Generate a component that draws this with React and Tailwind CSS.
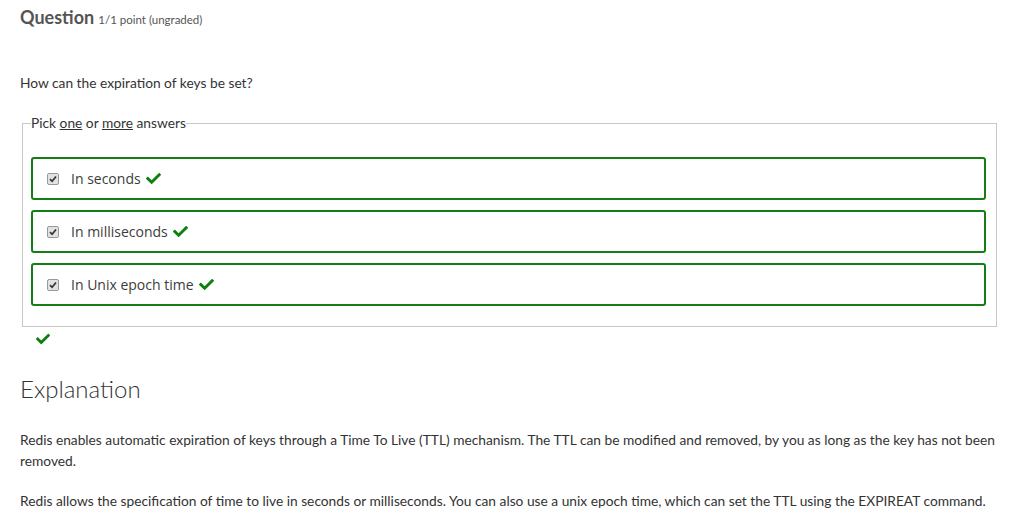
import React from "react";
import { FaCheck } from "react-icons/fa";

const answers = ["In seconds", "In milliseconds", "In Unix epoch time"];

const Option = ({ label }) => {
  return (
    <label className="flex items-center h-[43px] border-2 border-[#137e13] rounded-[3px] pl-[14px]">
      <span className="w-[12px] h-[12px] border border-[#999] rounded-[2px] bg-[#e2e2e2] flex items-center justify-center">
        <svg width="8" height="8" viewBox="0 0 8 8">
          <path d="M1 4.2 L3.1 6.3 L7 1.5" fill="none" stroke="#333" strokeWidth="1.7" />
        </svg>
      </span>
      <span className="ml-[12px] text-[14px] text-[#3c3c3c] font-['Open_Sans',sans-serif]">{label}</span>
      <FaCheck className="ml-[5px] text-[#0d7f0d] w-[15px] h-[15px]" />
    </label>
  );
};

const App = () => {
  return (
    <div className="bg-white min-h-screen pl-5 pr-[15px] pt-[5px] font-['Lato','Open_Sans',sans-serif] text-[#333]">
      <h2 className="leading-[24px] text-[#555]">
        <span className="text-[18px] font-bold">Question</span>{" "}
        <span className="text-[11.5px]">1/1 point (ungraded)</span>
      </h2>

      <p className="mt-[41px] text-[13.75px] leading-[20px]">How can the expiration of keys be set?</p>

      <fieldset className="mt-[22px] ml-[2px] border border-[#c8c8c8] p-0">
        <legend className="ml-[8px] text-[13.75px] leading-[16px]">
          Pick <u>one</u> or <u>more</u> answers
        </legend>
        <div className="flex flex-col gap-[10px] pl-[8px] pr-[10px] pt-[26px] pb-[20px]">
          {answers.map((a) => (
            <Option key={a} label={a} />
          ))}
        </div>
      </fieldset>

      <FaCheck className="ml-[16px] mt-[5px] text-[#0d7f0d] w-[14px] h-[14px]" />

      <h3 className="mt-[27px] text-[24px] leading-[32px] font-light">Explanation</h3>

      <p className="mt-[24px] text-[13.75px] leading-[21px]">
        Redis enables automatic expiration of keys through a Time To Live (TTL) mechanism. The TTL can be modified and removed, by you as long as the key has not been removed.
      </p>
      <p className="mt-[19px] text-[13.75px] leading-[21px]">
        Redis allows the specification of time to live in seconds or milliseconds. You can also use a unix epoch time, which can set the TTL using the EXPIREAT command.
      </p>
    </div>
  );
};

export default App;
